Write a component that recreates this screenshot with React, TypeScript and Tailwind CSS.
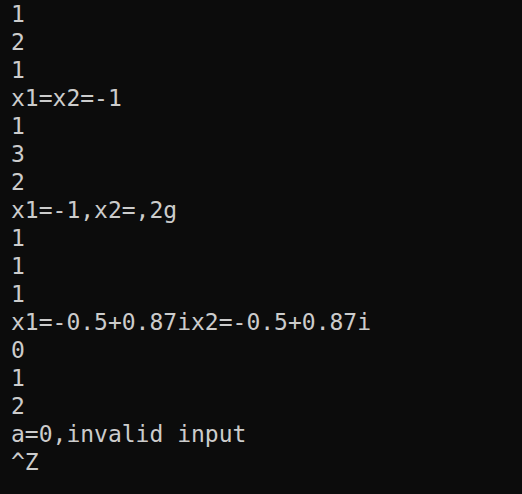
import React from 'react';

const lines = [
  '1',
  '2',
  '1',
  'x1=x2=-1',
  '1',
  '3',
  '2',
  'x1=-1,x2=,2g',
  '1',
  '1',
  '1',
  'x1=-0.5+0.87ix2=-0.5+0.87i',
  '0',
  '1',
  '2',
  'a=0,invalid input',
  '^Z',
];

export default function App() {
  return (
    <div className="w-[522px] h-[494px] bg-[#0c0c0c] overflow-hidden">
      <pre className="pl-[11px] pt-0 font-['DejaVu_Sans_Mono',monospace] text-[23px] leading-[28px] text-[#cccccc]">
        {lines.map((line, i) => (
          <div key={i} className="whitespace-pre">
            {line}
          </div>
        ))}
      </pre>
    </div>
  );
}
